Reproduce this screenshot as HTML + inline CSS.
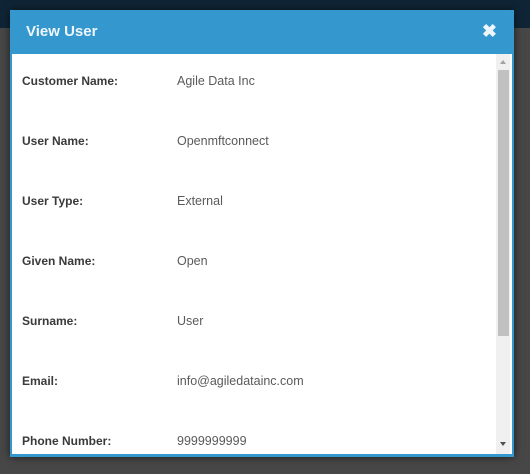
<!DOCTYPE html>
<html><head><style>
html,body{margin:0;padding:0;width:530px;height:474px;overflow:hidden;background:#474747;font-family:"Liberation Sans",sans-serif;}
.top{position:absolute;left:0;top:0;width:530px;height:28px;background:#0f2536;}
.modal{position:absolute;left:10px;top:10px;width:504px;height:447px;background:#3498cf;box-shadow:0 0 8px rgba(0,0,0,.6);}
.hd{position:absolute;left:16px;top:13px;color:#eef6fb;font-weight:bold;font-size:15px;}
.x{position:absolute;right:17px;top:11px;color:#eef6fb;font-weight:bold;font-size:18px;}
.body{position:absolute;left:2px;top:44px;width:500px;height:400px;background:#fff;overflow:hidden;}
.row{position:absolute;left:10px;font-size:12px;color:#333;}
.row b{position:absolute;left:0;top:0;white-space:nowrap;color:#3a3a3a;}
.row span{position:absolute;left:155px;top:0;white-space:nowrap;color:#5a5a5a;font-size:12.5px;}
.sb{position:absolute;left:484px;top:0;width:14px;height:400px;background:#f0f0f0;}
.th{position:absolute;left:2px;top:16px;width:11px;height:266px;background:#c1c1c1;}
.up{position:absolute;left:4px;top:6px;border-left:3.5px solid transparent;border-right:3.5px solid transparent;border-bottom:4px solid #a3a3a3;}
.dn{position:absolute;left:4px;top:388px;border-left:3.5px solid transparent;border-right:3.5px solid transparent;border-top:4px solid #505050;}
</style></head><body>
<div class="top"></div>
<div class="modal">
<div class="hd">View User</div><div class="x">✖</div>
<div class="body">
<div class="row" style="top:20px"><b>Customer Name:</b><span>Agile Data Inc</span></div>
<div class="row" style="top:80px"><b>User Name:</b><span>Openmftconnect</span></div>
<div class="row" style="top:140px"><b>User Type:</b><span>External</span></div>
<div class="row" style="top:200px"><b>Given Name:</b><span>Open</span></div>
<div class="row" style="top:260px"><b>Surname:</b><span>User</span></div>
<div class="row" style="top:320px"><b>Email:</b><span>info@agiledatainc.com</span></div>
<div class="row" style="top:380px"><b>Phone Number:</b><span>9999999999</span></div>
<div class="sb"><div class="up"></div><div class="th"></div><div class="dn"></div></div>
</div>
</div>
</body></html>
